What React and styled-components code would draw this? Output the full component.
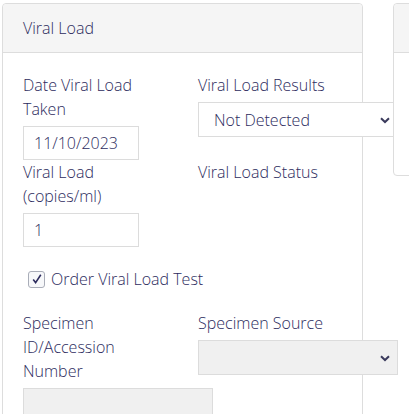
import React from "react";
import styled, { createGlobalStyle } from "styled-components";

const GlobalStyle = createGlobalStyle`
  body {
    margin: 0;
    background: #ffffff;
    font-family: "Open Sans", "Liberation Sans", sans-serif;
    font-weight: 300;
    color: #2d2c5e;
  }
`;

function App() {
  return (
    <Page>
      <GlobalStyle />
      <Card>
        <CardHeader>Viral Load</CardHeader>
        <CardBody>
          <FormRow>
            <Field>
              <Label>Date Viral Load Taken</Label>
              <TextInput width={116} defaultValue="11/10/2023" />
            </Field>
            <Field>
              <Label wide>Viral Load Results</Label>
              <Select value="Not Detected" />
            </Field>
          </FormRow>
          <FormRow>
            <Field>
              <Label>Viral Load (copies/ml)</Label>
              <TextInput width={116} defaultValue="1" />
            </Field>
            <Field>
              <Label wide>Viral Load Status</Label>
            </Field>
          </FormRow>
          <CheckRow>
            <CheckBox>
              <svg width="12" height="12" viewBox="0 0 12 12">
                <path
                  d="M2.2 6.6 L4.6 9.6 L9.8 1.8"
                  fill="none"
                  stroke="#2d2c5e"
                  strokeWidth="1.6"
                />
              </svg>
            </CheckBox>
            <span>Order Viral Load Test</span>
          </CheckRow>
          <FormRow>
            <Field>
              <Label>Specimen ID/Accession Number</Label>
              <TextInput width={190} disabled />
            </Field>
            <Field>
              <Label wide>Specimen Source</Label>
              <Select disabled />
            </Field>
          </FormRow>
        </CardBody>
      </Card>
      <SideCard>
        <CardHeader />
      </SideCard>
    </Page>
  );
}

function Select({ value, disabled }) {
  return (
    <SelectBox disabled={disabled}>
      <span>{value}</span>
      <svg width="10" height="7" viewBox="0 0 10 7">
        <path d="M1 1.2 L5 5 L9 1.2" fill="none" stroke="#3a3a5c" strokeWidth="2" />
      </svg>
    </SelectBox>
  );
}

const Page = styled.div`
  display: flex;
  align-items: flex-start;
  gap: 30px;
  padding: 3px 0 0 2px;
  width: 409px;
  height: 414px;
  overflow: hidden;
  box-sizing: border-box;
`;

const Card = styled.div`
  flex: 0 0 361px;
  min-width: 0;
  border: 1px solid #dddddd;
  border-radius: 4px;
  box-sizing: border-box;
  background: #ffffff;
  height: 460px;
`;

const SideCard = styled(Card)`
  position: relative;
  flex: 0 0 200px;
  height: 173px;
`;

const CardHeader = styled.div`
  background: #f5f5f5;
  border-bottom: 1px solid #dddddd;
  border-radius: 4px 4px 0 0;
  padding: 12px 20px;
  font-size: 16px;
  line-height: 24px;
  height: 24px;
`;

const CardBody = styled.div`
  padding: 20px 20px;
`;

const FormRow = styled.div`
  display: grid;
  grid-template-columns: 175px 200px;
  font-size: 16px;
  line-height: 24px;
`;

const Field = styled.div`
  display: flex;
  flex-direction: column;
  align-items: flex-start;
`;

const Label = styled.label`
  display: block;
  margin-bottom: 5px;
  max-width: ${(p) => (p.wide ? "none" : "135px")};
`;

const TextInput = styled.input`
  box-sizing: border-box;
  width: ${(p) => p.width}px;
  height: 34px;
  border: 1px solid #dcdcdc;
  background: ${(p) => (p.disabled ? "#f0f0f0" : "#ffffff")};
  padding: 0 10px;
  font-family: inherit;
  font-weight: 300;
  font-size: 16px;
  color: #2d2c5e;
  outline: none;
`;

const SelectBox = styled.div`
  box-sizing: border-box;
  width: 200px;
  height: 35px;
  border: 1px solid #dcdcdc;
  background: ${(p) => (p.disabled ? "#f0f0f0" : "#ffffff")};
  display: flex;
  align-items: center;
  justify-content: space-between;
  padding: 0 7px 0 15px;

  svg {
    margin-top: 1px;
  }
`;

const CheckRow = styled.div`
  display: flex;
  align-items: center;
  gap: 6px;
  margin: 20px 0 20px 5px;
  font-size: 16px;
  line-height: 24px;
`;

const CheckBox = styled.span`
  box-sizing: border-box;
  width: 17px;
  height: 17px;
  border: 1px solid #a9adb8;
  border-radius: 3px;
  background: #f7f8fa;
  display: flex;
  align-items: center;
  justify-content: center;
`;

export default App;
